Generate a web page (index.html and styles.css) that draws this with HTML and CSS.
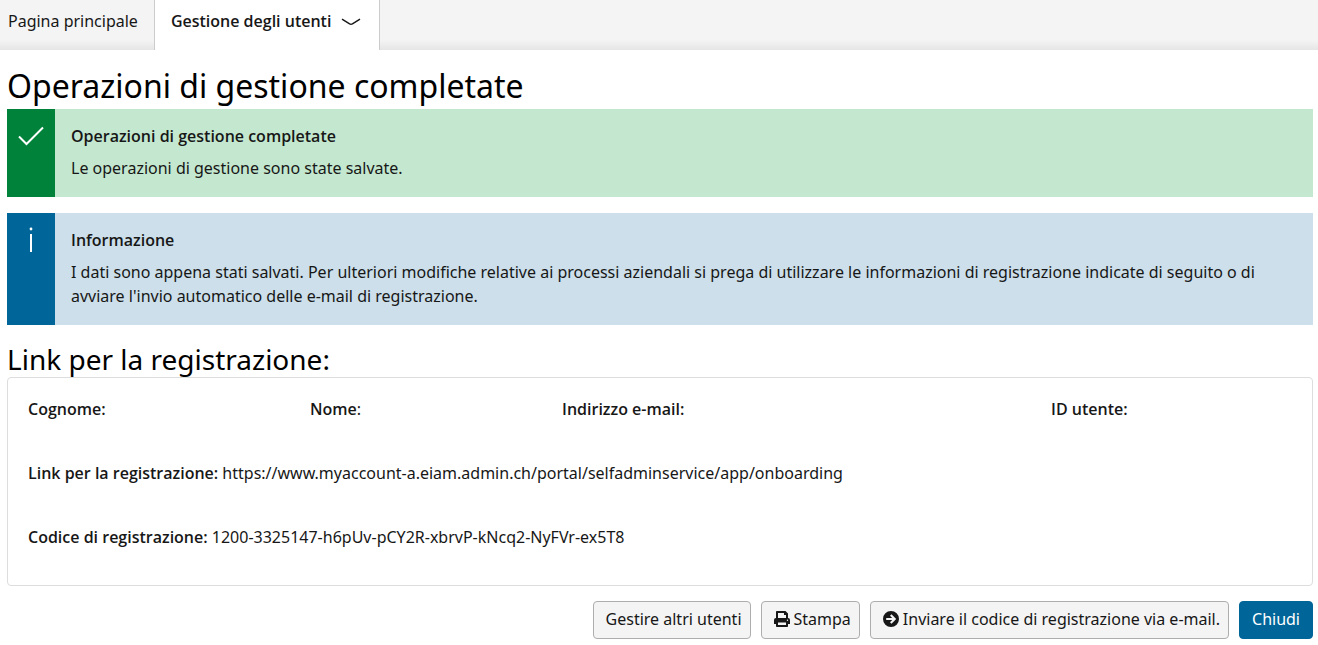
FILE: index.html
```html
<!DOCTYPE html>
<html lang="it">
<head>
<meta charset="utf-8">
<meta name="viewport" content="width=device-width, initial-scale=1">
<title>Gestione degli utenti</title>
<link rel="stylesheet" href="styles.css">
</head>
<body>
<nav class="tabs">
  <a class="tab" href="#">Pagina principale</a>
  <a class="tab tab-active" href="#" aria-current="page">Gestione degli utenti
    <svg class="chevron" viewBox="0 0 20 8" aria-hidden="true"><path d="M1 1.2 L8.6 5.8 Q10 6.5 11.4 5.8 L19 1.2"/></svg>
  </a>
</nav>
<main class="page">
  <h1 class="title">Operazioni di gestione completate</h1>
  <section class="alert alert-success">
    <div class="alert-icon">
      <svg viewBox="0 0 28 28" aria-hidden="true"><path d="M2 14.5 L9.5 22 L26 5.5"/></svg>
    </div>
    <div class="alert-body">
      <h2 class="alert-title">Operazioni di gestione completate</h2>
      <p class="alert-text">Le operazioni di gestione sono state salvate.</p>
    </div>
  </section>
  <section class="alert alert-info">
    <div class="alert-icon">
      <svg viewBox="0 0 28 28" aria-hidden="true"><path d="M14 8 V26"/><circle cx="14" cy="3" r="1.4"/></svg>
    </div>
    <div class="alert-body">
      <h2 class="alert-title">Informazione</h2>
      <p class="alert-text">I dati sono appena stati salvati. Per ulteriori modifiche relative ai processi aziendali si prega di utilizzare le informazioni di registrazione indicate di seguito o di avviare l'invio automatico delle e-mail di registrazione.</p>
    </div>
  </section>
  <h2 class="subtitle">Link per la registrazione:</h2>
  <section class="card">
    <div class="person">
      <div><b>Cognome:</b></div>
      <div><b>Nome</b>:</div>
      <div><b>Indirizzo e-mail:</b></div>
      <div><b>ID utente:</b></div>
    </div>
    <p class="detail"><b>Link per la registrazione:</b> https://www.myaccount-a.eiam.admin.ch/portal/selfadminservice/app/onboarding</p>
    <p class="detail"><b>Codice di registrazione:</b> 1200-3325147-h6pUv-pCY2R-xbrvP-kNcq2-NyFVr-ex5T8</p>
  </section>
  <div class="actions">
    <button class="btn" type="button">Gestire altri utenti</button>
    <button class="btn" type="button"><svg class="btn-icon" viewBox="0 0 16 16" aria-hidden="true"><path fill-rule="evenodd" d="M2 0.8 Q2 0 2.8 0 H11.5 L14 2.5 V7 Q16 7.2 16 9 V13 H14 V15.2 Q14 16 13.2 16 H2.8 Q2 16 2 15.2 V13 H0 V9 Q0 7.2 2 7 Z M4 2 V7 H12 V4 H10 V2 Z M4 11.5 V14 H12 V11.5 Z M13.5 8.5 A0.7 0.7 0 1 0 13.5 9.9 A0.7 0.7 0 1 0 13.5 8.5 Z"/></svg>Stampa</button>
    <button class="btn" type="button"><svg class="btn-icon" viewBox="0 0 16 16" aria-hidden="true"><path fill-rule="evenodd" d="M8 0 A8 8 0 1 0 8 16 A8 8 0 1 0 8 0 Z M8.5 3.2 L13.2 8 L8.5 12.8 L7 11.3 L9.2 9.1 H3.2 V6.9 H9.2 L7 4.7 Z"/></svg>Inviare il codice di registrazione via e-mail.</button>
    <button class="btn btn-primary" type="button">Chiudi</button>
  </div>
</main>
</body>
</html>
```
FILE: styles.css
```css
* { box-sizing: border-box; }
body {
  margin: 0;
  background: #fff;
  color: #171717;
  font: 16px/24px "Noto Sans", "Open Sans", sans-serif;
}
h1, h2, p { margin: 0; }
b, .tab-active, .alert-title {
  font-family: "Open Sans", "Noto Sans", sans-serif;
  font-weight: 600;
}
.tabs {
  display: flex;
  height: 50px;
  background: linear-gradient(#f4f4f4 80%, #e5e5e5);
}
.tab {
  display: flex;
  gap: 10px;
  padding: 9px 16px 16px 8px;
  color: inherit;
  text-decoration: none;
}
.tab-active {
  padding: 9px 18px 16px 16px;
  border: solid #ccc;
  border-width: 0 1px;
  background: #fff;
}
.chevron {
  width: 20px;
  height: 8px;
  margin-top: 9px;
  fill: none;
  stroke: #171717;
  stroke-width: 1.5;
}
.page { padding: 15px 5px 6px 7px; }
.title {
  padding-bottom: 2px;
  color: #000;
  font-size: 32px;
  line-height: 42px;
  font-weight: 400;
}
.alert {
  display: flex;
  margin-bottom: 16px;
}
.alert-icon {
  flex: none;
  width: 48px;
  padding: 13px 10px;
}
.alert-icon svg {
  display: block;
  width: 28px;
  height: 28px;
  fill: none;
  stroke: #fff;
  stroke-width: 2;
}
.alert-icon circle { fill: #fff; stroke: none; }
.alert-body { padding: 15px 16px 17px; }
.alert-title {
  margin-bottom: 8px;
  font-size: 16px;
  line-height: 24px;
}
.alert-success { background: #c4e8cf; }
.alert-success .alert-icon { background: #00823b; }
.alert-info { background: #ccdfea; }
.alert-info .alert-icon { background: #006699; }
.subtitle {
  color: #000;
  font-size: 28px;
  line-height: 36px;
  font-weight: 400;
}
.card {
  padding: 19px 20px 36px;
  border: 1px solid #ddd;
  border-radius: 4px;
}
.person {
  display: grid;
  grid-template-columns: 282fr 252fr 489fr 241fr;
}
.detail { margin-top: 40px; }
.actions {
  display: flex;
  justify-content: flex-end;
  gap: 10px;
  margin-top: 15px;
}
.btn {
  display: flex;
  align-items: center;
  gap: 4px;
  padding: 5px 8px 7px 12px;
  border: 1px solid #adadad;
  border-radius: 4px;
  background: #f4f4f4;
  color: #171717;
  font: inherit;
  white-space: nowrap;
}
.btn-icon {
  width: 16px;
  height: 16px;
  fill: #171717;
}
.btn-primary {
  padding: 5px 12px 7px;
  border-color: #006699;
  background: #006699;
  color: #fff;
}
```
